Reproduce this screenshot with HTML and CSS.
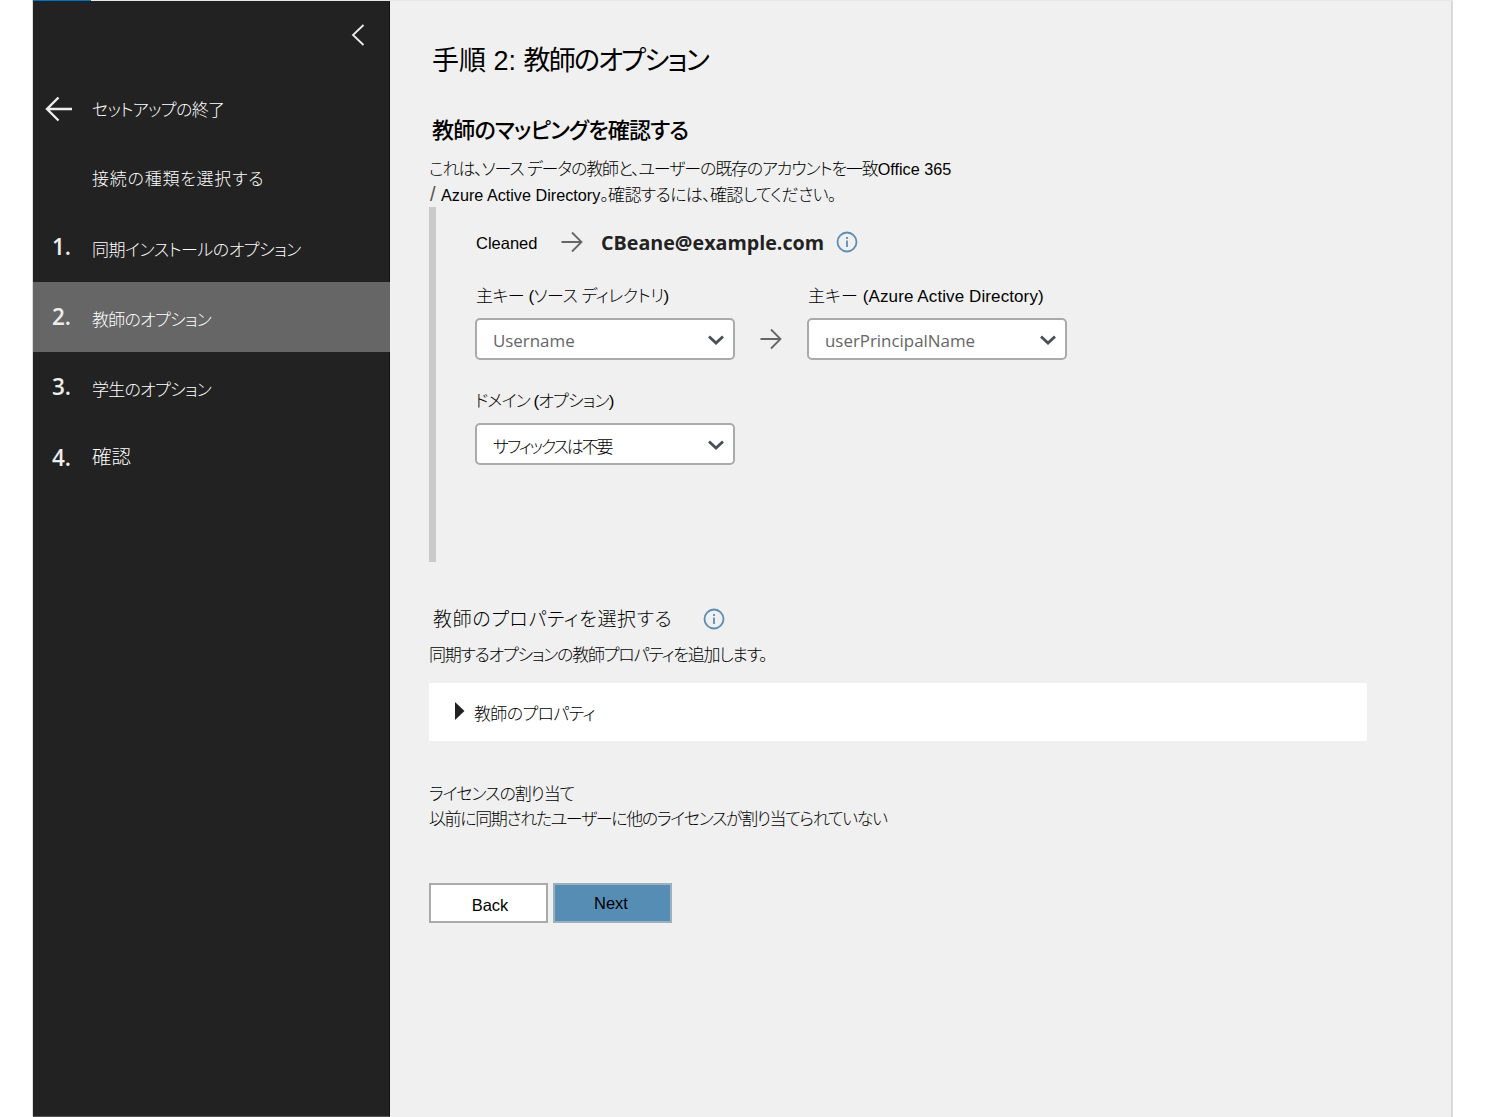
FILE: index.html
```html
<!DOCTYPE html>
<html lang="ja">
<head>
  <meta charset="utf-8">
  <title>教師のオプション</title>
  <link rel="stylesheet" href="styles.css">
</head>
<body>

<div class="wizard">
  <div class="progress"></div>

  <nav class="sidebar">
    <div class="collapse">
      <svg width="16" height="24" viewBox="0 0 16 24"><path d="M13.5 2 L3 12 L13.5 22"/></svg>
    </div>
    <a class="step">
      <span class="num"><svg class="back-icon" width="28" height="26" viewBox="0 0 28 26"><path d="M13.5 1.5 L2 13 L13.5 24.5 M2 13 H27"/></svg></span>
      <span class="t-exit">セットアップの終了</span>
    </a>
    <a class="step type"><span class="num"></span><span class="t-type">接続の種類を選択する</span></a>
    <a class="step"><span class="num">1.</span><span class="t-sync">同期インストールのオプション</span></a>
    <a class="step active"><span class="num">2.</span><span class="t-opt">教師のオプション</span></a>
    <a class="step"><span class="num">3.</span><span class="t-opt">学生のオプション</span></a>
    <a class="step last"><span class="num">4.</span><span class="t-review">確認</span></a>
  </nav>

  <main class="content">
    <h1>手順 2: <span class="t-title">教師のオプション</span></h1>
    <h2>教師のマッピングを確認する</h2>
    <p class="intro">
      <span class="line line1">これは、ソース データの教師と、ユーザーの既存のアカウントを一致<span class="latin">Office 365</span></span>
      <span class="line line2"><span class="slash">/</span><span class="latin">Azure Active Directory</span>。確認するには、確認してください。</span>
    </p>

    <div class="mapping">
      <div class="sample">
        <span class="source">Cleaned</span>
        <svg class="arrow" width="24" height="24" viewBox="0 0 24 24"><path d="M1.500 12 H21.500 M12 2.500 L21.500 12 L12 21.500"/></svg>
        <span class="email">CBeane@example.com</span>
        <svg class="info" width="22" height="22" viewBox="0 0 22 22"><circle cx="11" cy="11" r="9.500"/><path d="M11 9.500 V16 M11 6 V8"/></svg>
      </div>
      <div class="fields">
        <div class="field">
          <label class="l-source">主キー (ソース ディレクトリ)</label>
          <div class="select">Username<svg width="18" height="12" viewBox="0 0 18 12"><path d="M2 2.500 L9 9 L16 2.500"/></svg></div>
        </div>
        <svg class="arrow" width="24" height="24" viewBox="0 0 24 24"><path d="M1.500 12 H21.500 M12 2.500 L21.500 12 L12 21.500"/></svg>
        <div class="field">
          <label class="l-azure">主キー (Azure Active Directory)</label>
          <div class="select">userPrincipalName<svg width="18" height="12" viewBox="0 0 18 12"><path d="M2 2.500 L9 9 L16 2.500"/></svg></div>
        </div>
      </div>
      <div class="field domain">
        <label class="l-domain">ドメイン (オプション)</label>
        <div class="select"><span class="suffix">サフィックスは不要</span><svg width="18" height="12" viewBox="0 0 18 12"><path d="M2 2.500 L9 9 L16 2.500"/></svg></div>
      </div>
    </div>

    <div class="props-title">
      <span class="t-props">教師のプロパティを選択する</span>
      <svg class="info" width="22" height="22" viewBox="0 0 22 22"><circle cx="11" cy="11" r="9.500"/><path d="M11 9.500 V16 M11 6 V8"/></svg>
    </div>
    <p class="props-text">同期するオプションの教師プロパティを追加します。</p>
    <div class="panel">
      <svg width="10" height="18" viewBox="0 0 10 18"><path d="M0 0 L9.500 9 L0 18 Z"/></svg>
      <span class="t-panel">教師のプロパティ</span>
    </div>

    <div class="license">
      <span class="line lic1">ライセンスの割り当て</span>
      <span class="line lic2">以前に同期されたユーザーに他のライセンスが割り当てられていない</span>
    </div>

    <div class="buttons">
      <button class="btn">Back</button>
      <button class="btn next">Next</button>
    </div>
  </main>
</div>

</body>
</html>
```
FILE: styles.css
```css
* {
  box-sizing: border-box;
}
body {
  margin: 0;
  background: #fff;
  color: #000;
  font-family: "Liberation Sans", "Noto Sans CJK JP", sans-serif;
  font-size: 17px;
  font-weight: 300;
  font-feature-settings: "palt";
  white-space: nowrap;
  overflow: hidden;
}
h1, h2, p {
  margin: 0;
}
svg {
  fill: none;
  flex: none;
}
.wizard {
  display: grid;
  grid-template-columns: 357px 1063px;
  grid-template-rows: 1px 1116px;
  margin-left: 32px;
  width: 1421px;
  border-left: 1px solid #ddd;
}
.progress {
  grid-column: 1 / 3;
  background: linear-gradient(to right, #0072c6 58px, #e4e8e8 58px);
}

/* left menu */
.sidebar {
  background: #222;
  color: #fff;
  border-right: 1px solid #111;
  border-bottom: 1px solid #555;
}
.collapse {
  height: 71px;
  padding: 22px 0 0 317px;
}
.collapse path {
  stroke: #eee;
  stroke-width: 1.8;
}
.step {
  display: flex;
  align-items: center;
  height: 70px;
  padding-top: 3px;
}
.step.active {
  background: #666;
  width: 357px;
}
.step.type {
  padding-top: 0;
}
.step.last {
  padding-bottom: 3px;
  padding-top: 0;
}
.num {
  width: 59px;
  padding: 0 0 4px 19px;
  font: 600 22.5px "Open Sans", sans-serif;
  color: #eee;
}
.step.last .num {
  padding: 3px 0 0 19px;
}
.back-icon {
  display: block;
  margin: 4px 0 0 -7px;
}
.back-icon path {
  stroke: #eee;
  stroke-width: 2.4;
}

/* tracking of the menu texts */
.t-exit {
  letter-spacing: -0.6px;
}
.t-type {
  letter-spacing: 0.75px;
}
.t-sync {
  letter-spacing: -0.5px;
}
.t-opt {
  letter-spacing: -0.75px;
}
.t-review {
  font-size: 19.5px;
}

/* main pane */
.content {
  background: #f0f0f0;
  border-right: 2px solid #d9d9d9;
  padding: 40px 0 0 39px;
}
h1 {
  height: 40px;
  line-height: 40px;
  margin-left: 3px;
  font-size: 27px;
  font-weight: 400;
}
.t-title {
  letter-spacing: -1.8px;
}
h2 {
  height: 30px;
  line-height: 30px;
  margin: 35px 0 10px 3px;
  font-size: 22px;
  font-weight: 500;
  letter-spacing: -0.75px;
}
.intro {
  height: 51px;
}
.line {
  display: block;
  height: 26px;
  line-height: 26px;
}
.line1 {
  letter-spacing: -1.15px;
}
.line2 {
  letter-spacing: -0.65px;
}
.latin {
  font-size: 16.2px;
  letter-spacing: 0;
}
.slash {
  display: inline-block;
  width: 12px;
  padding-left: 1px;
  color: #555;
  font-size: 20px;
  line-height: 20px;
}
.mapping {
  height: 355px;
  border-left: 7px solid #cacaca;
  padding: 20px 0 0 39px;
}
.sample {
  display: flex;
  align-items: center;
  height: 30px;
}
.arrow path {
  stroke: #666;
  stroke-width: 1.8;
}
.source {
  width: 85px;
  padding: 3px 0 0 1px;
  font-size: 16.5px;
}
.email {
  margin: 0 12px 0 17px;
  width: 223px;
  font: 700 19.7px "Open Sans", sans-serif;
  color: #222;
}
.info circle, .info path {
  stroke: #5b8db5;
  stroke-width: 1.8;
}
.fields {
  display: flex;
  align-items: flex-end;
  margin-top: 28px;
}
.fields > .arrow {
  margin: 0 24px 9px;
}
.field label {
  display: block;
  height: 24px;
  line-height: 24px;
  margin-bottom: 9px;
}
.l-source {
  padding-left: 1px;
  letter-spacing: -0.5px;
}
.l-azure {
  padding-left: 1px;
  letter-spacing: 0.1px;
}
.l-domain {
  letter-spacing: -0.9px;
}
.select {
  display: flex;
  align-items: center;
  justify-content: space-between;
  width: 260px;
  height: 42px;
  padding: 2px 8px 0 16px;
  border: 2px solid #aaa;
  border-radius: 5px;
  background: #fff;
  color: #666;
  font: 400 16.9px "Open Sans", sans-serif;
}
.select path {
  stroke: #484f56;
  stroke-width: 2.8;
}
.suffix {
  color: #000;
  font: 300 17px "Noto Sans CJK JP", sans-serif;
  font-feature-settings: "palt";
  letter-spacing: -2.1px;
}
.domain {
  margin-top: 30px;
}

.props-title {
  display: flex;
  align-items: center;
  height: 30px;
  margin: 42px 0 9px 4px;
  font-size: 19px;
}
.t-props {
  width: 270px;
  padding-bottom: 3px;
  letter-spacing: 0.65px;
}
.props-text {
  height: 26px;
  line-height: 26px;
  letter-spacing: -1.25px;
}
.panel {
  display: flex;
  align-items: center;
  width: 938px;
  height: 58px;
  margin-top: 14px;
  padding-left: 26px;
  background: #fff;
}
.panel svg {
  margin-bottom: 2px;
}
.panel path {
  fill: #222;
}
.t-panel {
  margin-left: 9px;
  letter-spacing: -0.65px;
}
.license {
  margin-top: 41px;
}
.license .line {
  height: 25px;
  line-height: 25px;
}
.lic1 {
  letter-spacing: -1.1px;
}
.lic2 {
  letter-spacing: -1.38px;
}
.buttons {
  display: flex;
  gap: 5px;
  margin-top: 51px;
}
.btn {
  width: 119px;
  height: 40px;
  padding: 4px 0 0 3px;
  border: 2px solid #aaa;
  background: #fff;
  color: #000;
  font: 16.5px "Liberation Sans", sans-serif;
}
.btn.next {
  padding: 1px 3px 0 0;
  border-color: #9db0bf;
  background: #568db5;
}
```
